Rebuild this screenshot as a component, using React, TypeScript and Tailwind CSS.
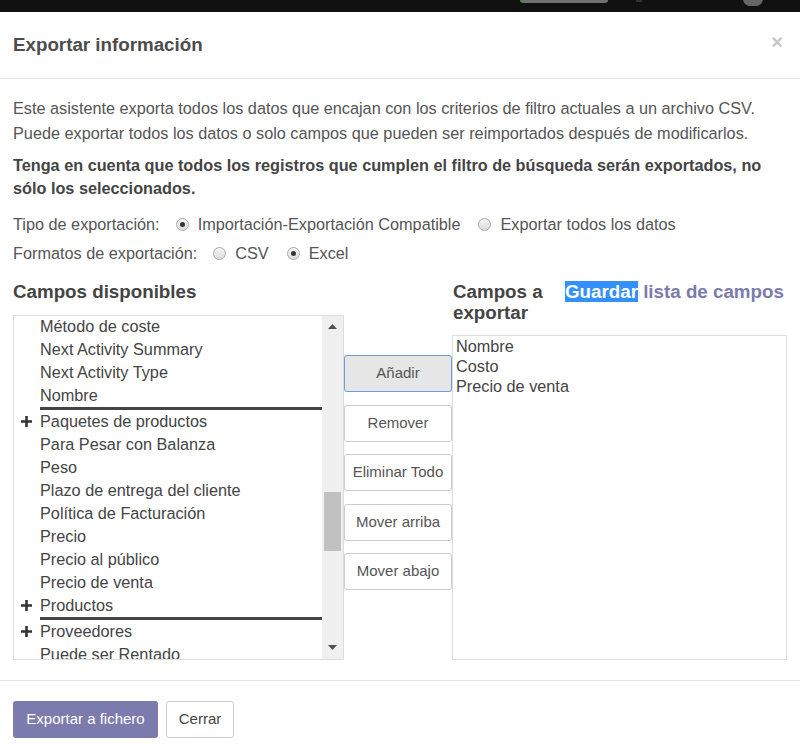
import React from 'react';

const LEFT_FIELDS: { label: string; plus?: boolean; sep?: boolean }[] = [
  { label: 'Método de coste' },
  { label: 'Next Activity Summary' },
  { label: 'Next Activity Type' },
  { label: 'Nombre', sep: true },
  { label: 'Paquetes de productos', plus: true },
  { label: 'Para Pesar con Balanza' },
  { label: 'Peso' },
  { label: 'Plazo de entrega del cliente' },
  { label: 'Política de Facturación' },
  { label: 'Precio' },
  { label: 'Precio al público' },
  { label: 'Precio de venta' },
  { label: 'Productos', plus: true, sep: true },
  { label: 'Proveedores', plus: true },
  { label: 'Puede ser Rentado' },
];

const EXPORT_FIELDS = ['Nombre', 'Costo', 'Precio de venta'];

const ACTIONS = ['Añadir', 'Remover', 'Eliminar Todo', 'Mover arriba', 'Mover abajo'];

function Radio({ checked }: { checked?: boolean }) {
  return (
    <span className="inline-flex items-center justify-center w-[13px] h-[13px] rounded-full border border-[#a9a9a9] bg-gradient-to-b from-[#f4f4f4] to-[#dcdcdc]">
      {checked && <span className="w-[5px] h-[5px] rounded-full bg-[#333]" />}
    </span>
  );
}

function Plus() {
  return (
    <svg width="13" height="13" viewBox="0 0 13 13" className="shrink-0">
      <path d="M6.5 1v11M1 6.5h11" stroke="#333" strokeWidth="2.6" />
    </svg>
  );
}

export default function App() {
  return (
    <div className="w-[800px] h-[744px] overflow-hidden bg-white font-['Liberation_Sans',Arial,sans-serif]">
      {/* dimmed navbar behind the modal */}
      <div className="relative h-[12px] bg-[#111]">
        <div className="absolute left-[520px] top-0 w-[88px] h-[3px] rounded-b-[3px] bg-[#6f6f6f] border-l-[3px] border-[#3c8c3c]" />
        <div className="absolute left-[636px] top-0 w-[6px] h-[2px] bg-[#333]" />
        <div className="absolute left-[743px] top-[-8px] w-[20px] h-[14px] rounded-full bg-[#666]" />
      </div>

      {/* header */}
      <div className="flex items-center justify-between h-[67px] px-[13px] border-b border-[#e5e5e5]">
        <h4 className="text-[18.75px] font-bold text-[#4c4c4c]">Exportar información</h4>
        <span className="text-[20px] leading-none font-bold text-[#c8c8c8] mr-[4px] -mt-[6px]">×</span>
      </div>

      {/* body */}
      <div className="px-[13px] pt-[17px] text-[#555]">
        <p className="text-[16.25px] leading-[25px]">
          Este asistente exporta todos los datos que encajan con los criterios de filtro actuales a un archivo CSV.
          <br />
          Puede exportar todos los datos o solo campos que pueden ser reimportados después de modificarlos.
        </p>
        <p className="mt-[8px] text-[16.25px] leading-[23px] font-bold text-[#444]">
          Tenga en cuenta que todos los registros que cumplen el filtro de búsqueda serán exportados, no sólo los seleccionados.
        </p>
        <div className="mt-[10px] flex items-center h-[29px] text-[16.25px]">
          <span>Tipo de exportación:</span>
          <span className="ml-[16px] mr-[9px] flex"><Radio checked /></span>
          <span>Importación-Exportación Compatible</span>
          <span className="ml-[18px] mr-[9px] flex"><Radio /></span>
          <span>Exportar todos los datos</span>
        </div>
        <div className="flex items-center h-[29px] text-[16.25px]">
          <span>Formatos de exportación:</span>
          <span className="ml-[16px] mr-[9px] flex"><Radio /></span>
          <span>CSV</span>
          <span className="ml-[18px] mr-[9px] flex"><Radio checked /></span>
          <span>Excel</span>
        </div>

        {/* field pickers */}
        <div className="mt-[13px] flex items-start">
          <div className="w-[331px] shrink-0">
            <h4 className="text-[18.75px] leading-[21px] font-bold text-[#444]">Campos disponibles</h4>
            <div className="mt-[13px] h-[345px] border border-[#ddd] flex overflow-hidden">
              <div className="flex-1 -mt-[1px] text-[16.25px] text-[#444]">
                {LEFT_FIELDS.map((f) => (
                  <div key={f.label} className="flex items-start pl-[6px]">
                    <span className="w-[20px] h-[23px] flex items-center">{f.plus && <Plus />}</span>
                    <span className={`flex-1 leading-[23px] ${f.sep ? 'border-b-[3px] border-[#444]' : ''}`}>
                      {f.label}
                    </span>
                  </div>
                ))}
              </div>
              <div className="w-[21px] bg-[#f0f0f0] flex flex-col items-center">
                <svg width="9" height="5" viewBox="0 0 9 5" className="mt-[8px]">
                  <path d="M0 5L4.5 0 9 5z" fill="#505050" />
                </svg>
                <div className="mt-[163px] w-[17px] h-[59px] bg-[#c1c1c1]" />
                <div className="flex-1" />
                <svg width="9" height="5" viewBox="0 0 9 5" className="mb-[9px]">
                  <path d="M0 0h9L4.5 5z" fill="#505050" />
                </svg>
              </div>
            </div>
          </div>

          <div className="w-[108px] shrink-0 pt-[74px] flex flex-col gap-[12.5px]">
            {ACTIONS.map((a, i) => (
              <button
                key={a}
                className={`h-[37px] w-[108px] rounded-[3px] border text-[15px] text-[#555] whitespace-nowrap ${
                  i === 0 ? 'bg-[#e6e6e6] border-[#6a9fdb]' : 'bg-white border-[#ccc]'
                }`}
              >
                {a}
              </button>
            ))}
          </div>

          <div className="flex-1">
            <div className="flex items-start pl-[1px]">
              <h4 className="w-[112px] text-[18.75px] leading-[21px] font-bold text-[#444]">Campos a exportar</h4>
              <a className="text-[18.75px] leading-[21px] font-bold text-[#7c7bad] whitespace-nowrap">
                <span className="bg-[#3390ff] text-white">Guardar</span> lista de campos
              </a>
            </div>
            <div className="mt-[12px] h-[325px] border border-[#ddd] px-[3px] text-[16.25px] leading-[20px] text-[#444]">
              {EXPORT_FIELDS.map((f) => (
                <div key={f}>{f}</div>
              ))}
            </div>
          </div>
        </div>
      </div>

      {/* footer */}
      <div className="mt-[20px] border-t border-[#e5e5e5] px-[13px] pt-[20px] flex gap-[8px]">
        <button className="h-[37px] w-[145px] rounded-[3px] bg-[#7c7bad] text-white text-[15px]">Exportar a fichero</button>
        <button className="h-[37px] w-[68px] rounded-[3px] border border-[#ccc] bg-white text-[#444] text-[15px]">Cerrar</button>
      </div>
    </div>
  );
}
